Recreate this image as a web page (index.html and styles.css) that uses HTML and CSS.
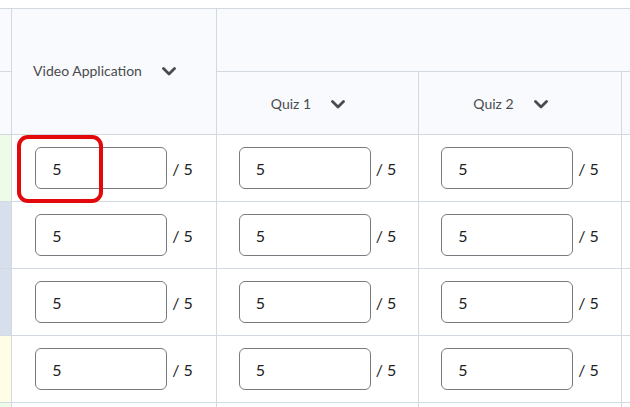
FILE: index.html
```html
<!DOCTYPE html>
<html lang="en">
<head>
<meta charset="utf-8">
<title>Grades</title>
<link rel="stylesheet" href="styles.css">
</head>
<body>
<div class="page">
  <div class="grid">
    <div class="cell side side-head"></div>
    <div class="cell head head-tall"><span class="head-label">Video Application</span><svg class="chev" viewBox="0 0 14 9"><path d="M1.5 1.5 L7 7 L12.5 1.5" /></svg></div>
    <div class="cell head head-group"></div>

    <div class="cell side side-head"></div>
    <div class="cell head"><span class="head-label">Quiz 1</span><svg class="chev" viewBox="0 0 14 9"><path d="M1.5 1.5 L7 7 L12.5 1.5" /></svg></div>
    <div class="cell head"><span class="head-label">Quiz 2</span><svg class="chev" viewBox="0 0 14 9"><path d="M1.5 1.5 L7 7 L12.5 1.5" /></svg></div>
    <div class="cell head"></div>

    <div class="cell side green"></div>
    <div class="cell data"><span class="input">5</span><span class="out">/ 5</span></div>
    <div class="cell data"><span class="input">5</span><span class="out">/ 5</span></div>
    <div class="cell data"><span class="input">5</span><span class="out">/ 5</span></div>
    <div class="cell data"></div>

    <div class="cell side blue"></div>
    <div class="cell data"><span class="input">5</span><span class="out">/ 5</span></div>
    <div class="cell data"><span class="input">5</span><span class="out">/ 5</span></div>
    <div class="cell data"><span class="input">5</span><span class="out">/ 5</span></div>
    <div class="cell data"></div>

    <div class="cell side blue"></div>
    <div class="cell data"><span class="input">5</span><span class="out">/ 5</span></div>
    <div class="cell data"><span class="input">5</span><span class="out">/ 5</span></div>
    <div class="cell data"><span class="input">5</span><span class="out">/ 5</span></div>
    <div class="cell data"></div>

    <div class="cell side yellow"></div>
    <div class="cell data"><span class="input">5</span><span class="out">/ 5</span></div>
    <div class="cell data"><span class="input">5</span><span class="out">/ 5</span></div>
    <div class="cell data"><span class="input">5</span><span class="out">/ 5</span></div>
    <div class="cell data"></div>

    <div class="cell side green"></div>
    <div class="cell data"></div>
    <div class="cell data"></div>
    <div class="cell data"></div>
    <div class="cell data"></div>
  </div>
  <div class="highlight"></div>
</div>
</body>
</html>
```

FILE: styles.css
```css
html, body {
  margin: 0;
  padding: 0;
  background: #ffffff;
  overflow: hidden;
}

body {
  font-family: Lato, "Open Sans", sans-serif;
  color: #202122;
}

.page {
  position: relative;
  width: 630px;
  height: 407px;
  overflow: hidden;
  padding-top: 8px;
  box-sizing: border-box;
}

.grid {
  display: grid;
  grid-template-columns: 11px 204px 201px 202px 40px;
  grid-template-rows: 62px 62px 66px 66px 66px 66px 40px;
  gap: 1px;
  background: #d3d9e1;
  border-top: 1px solid #d3d9e1;
  width: 662px;
}

.cell {
  background: #ffffff;
  display: flex;
  align-items: center;
  justify-content: center;
}

.side-head {
  background: #f9fafd;
}

.green { background: #eefbe9; }
.blue { background: #d6dfeb; }
.yellow { background: #fffde6; }

.head {
  background: #f9fafd;
  padding-right: 19px;
  font-size: 14px;
  color: #494c4e;
}

.head-tall {
  grid-row: span 2;
  padding-bottom: 2px;
}

.head-group {
  grid-column: span 3;
}

.head-label {
  white-space: nowrap;
}

.chev {
  width: 14px;
  height: 9px;
  margin-left: 20px;
  margin-top: 2px;
  fill: none;
  stroke: #494c4e;
  stroke-width: 2.8;
  stroke-linecap: round;
  stroke-linejoin: round;
}

.data {
  font-size: 16px;
}

.input {
  box-sizing: border-box;
  width: 132px;
  height: 42px;
  border: 1px solid #787c80;
  border-radius: 6px;
  background: #ffffff;
  padding-left: 16px;
  display: flex;
  align-items: center;
  color: #202122;
}

.out {
  margin-left: 5px;
  white-space: nowrap;
  color: #202122;
}

.highlight {
  position: absolute;
  left: 17px;
  top: 135px;
  width: 86px;
  height: 68px;
  box-sizing: border-box;
  border: 4.5px solid #e2080c;
  border-radius: 11px;
}
```
